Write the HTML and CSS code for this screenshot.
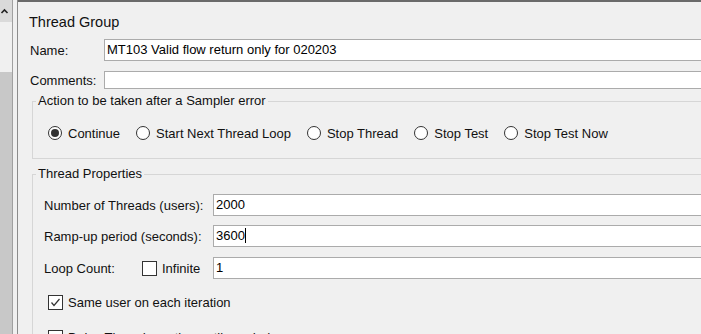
FILE: index.html
```html
<!DOCTYPE html>
<html>
<head>
<meta charset="utf-8">
<title>Thread Group</title>
<link rel="stylesheet" href="styles.css">
</head>
<body>
<div class="app">
  <div class="scrollbar">
    <div class="sb-btn"><svg width="12" height="22" viewBox="0 0 12 22"><polyline points="1.5,13 4.5,10 7.5,13" fill="none" stroke="#222" stroke-width="1.6"/></svg></div>
    <div class="sb-track"></div>
    <div class="sb-thumb"></div>
  </div>
  <div class="divider"></div>
  <div class="panel">
    <div class="title">Thread Group</div>
    <div class="form-row name-row">
      <span class="lbl">Name:</span>
      <div class="field tall">MT103 Valid flow return only for 020203</div>
    </div>
    <div class="form-row comments-row">
      <span class="lbl">Comments:</span>
      <div class="field short"></div>
    </div>
    <fieldset class="group action-group">
      <legend>Action to be taken after a Sampler error</legend>
      <div class="group-body radios">
        <span class="radio-opt"><span class="radio checked"></span>Continue</span>
        <span class="radio-opt"><span class="radio"></span>Start Next Thread Loop</span>
        <span class="radio-opt"><span class="radio"></span>Stop Thread</span>
        <span class="radio-opt"><span class="radio"></span>Stop Test</span>
        <span class="radio-opt"><span class="radio"></span>Stop Test Now</span>
      </div>
    </fieldset>
    <fieldset class="group props-group">
      <legend>Thread Properties</legend>
      <div class="group-body props">
        <div class="prop-row">
          <span class="prop-lbl">Number of Threads (users):</span>
          <div class="field tall">2000</div>
        </div>
        <div class="prop-row r2">
          <span class="prop-lbl">Ramp-up period (seconds):</span>
          <div class="field tall">3600<span class="caret"></span></div>
        </div>
        <div class="prop-row r3">
          <span class="prop-lbl loop"><span class="loop-lbl">Loop Count:</span><span class="check"></span>Infinite</span>
          <div class="field tall">1</div>
        </div>
        <div class="check-row c1">
          <span class="check"><svg width="13" height="13" viewBox="0 0 13 13"><polyline points="2.5,6.5 5,9.5 10.5,3" fill="none" stroke="#333" stroke-width="1.2"/></svg></span>Same user on each iteration
        </div>
        <div class="check-row c2">
          <span class="check"></span>Delay Thread creation until needed
        </div>
      </div>
    </fieldset>
  </div>
</div>
</body>
</html>
```
FILE: styles.css
```css
html, body {
  margin: 0;
  height: 100%;
  overflow: hidden;
  background: #f0f0f0;
}
body {
  font-family: "Liberation Sans", Arial, sans-serif;
  font-size: 13px;
  color: #111;
}
.app {
  display: flex;
  height: 334px;
  overflow: hidden;
}
.scrollbar {
  width: 12px;
  flex: none;
  display: flex;
  flex-direction: column;
}
.sb-btn {
  height: 22px;
  background: #dadada;
}
.sb-btn svg { display: block; }
.sb-track {
  height: 50px;
  background: #f0f0f0;
}
.sb-thumb {
  flex: 1;
  background: #c8c8c8;
}
.divider {
  width: 4px;
  flex: none;
  background: #f0f0f0;
  border-left: 1px solid #a0a0a0;
  border-right: 1px solid #8c8c8c;
}
.panel {
  flex: 1;
  min-width: 0;
  border-top: 2px solid #6a6a6a;
  padding: 11px 0 0 12px;
  overflow: hidden;
}
.title {
  font-size: 14.5px;
  line-height: 18px;
  margin-left: -1px;
}
.form-row {
  display: flex;
  align-items: center;
}
.name-row { margin-top: 8px; }
.comments-row { margin-top: 10px; }
.lbl {
  width: 74px;
  flex: none;
}
.field {
  flex: 1;
  box-sizing: border-box;
  background: #fff;
  border: 1px solid #ababab;
  border-right: none;
  padding: 0 2px;
  color: #000;
  white-space: nowrap;
}
.field.tall {
  height: 22px;
  line-height: 20px;
}
.field.short {
  height: 18px;
}
.caret {
  display: inline-block;
  width: 1px;
  height: 15px;
  background: #000;
  vertical-align: -3px;
}
.group {
  margin: 0 0 0 2px;
  padding: 0;
  border: 1px solid #d6d6d6;
  border-right: none;
  min-width: 0;
}
.group legend {
  font-size: 13px;
  line-height: 16px;
  padding: 0 2px;
  margin-left: 3px;
}
.action-group { margin-top: 4px; }
.props-group { margin-top: 7px; }
.radios {
  display: flex;
  align-items: center;
  gap: 16px;
  height: 20px;
  padding: 14px 0 15px 15px;
}
.radio-opt {
  display: inline-flex;
  align-items: center;
  white-space: nowrap;
}
.radio {
  width: 14px;
  height: 14px;
  box-sizing: border-box;
  border: 1px solid #333;
  border-radius: 50%;
  background: #fff;
  margin-right: 6px;
  display: inline-flex;
  align-items: center;
  justify-content: center;
}
.radio.checked::after {
  content: "";
  width: 8px;
  height: 8px;
  border-radius: 50%;
  background: #333;
}
.props {
  padding: 12px 0 0 11px;
}
.prop-row {
  display: flex;
  align-items: center;
  height: 22px;
}
.prop-row.r2 { margin-top: 9px; }
.prop-row.r3 { margin-top: 10px; }
.prop-lbl {
  width: 169px;
  flex: none;
  white-space: nowrap;
}
.prop-lbl.loop {
  display: flex;
  align-items: center;
}
.loop-lbl {
  width: 98px;
  flex: none;
}
.check {
  width: 15px;
  height: 15px;
  box-sizing: border-box;
  border: 1px solid #333;
  background: #fff;
  margin-right: 5px;
  flex: none;
  display: inline-flex;
  align-items: center;
  justify-content: center;
}
.check svg { display: block; }
.check-row {
  display: flex;
  align-items: center;
  height: 20px;
  padding-left: 4px;
  white-space: nowrap;
}
.check-row.c1 { margin-top: 13px; }
.check-row.c2 { margin-top: 15px; }
```
